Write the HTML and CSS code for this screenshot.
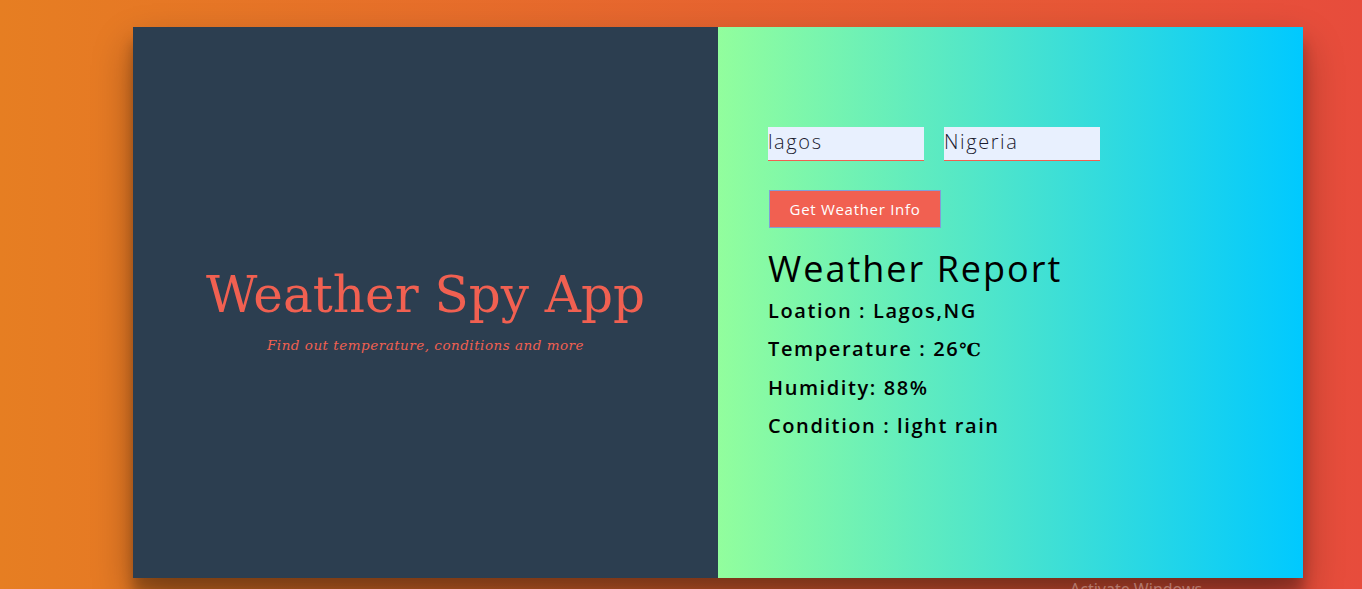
FILE: index.html
```html
<!DOCTYPE html>
<html lang="en">
<head>
<meta charset="utf-8">
<title>Weather Spy App</title>
<link rel="stylesheet" href="styles.css">
</head>
<body>
<div class="card">
  <section class="intro">
    <h1 class="title">Weather Spy App</h1>
    <p class="subtitle">Find out temperature, conditions and more</p>
  </section>
  <section class="panel">
    <form class="search">
      <div class="fields">
        <input class="field" type="text" value="lagos">
        <input class="field" type="text" value="Nigeria">
      </div>
      <button class="btn" type="button">Get Weather Info</button>
    </form>
    <div class="report">
      <h2 class="report-title">Weather Report</h2>
      <p class="row">Loation : Lagos,NG</p>
      <p class="row">Temperature : 26<span class="unit">℃</span></p>
      <p class="row">Humidity: 88%</p>
      <p class="row">Condition : light rain</p>
    </div>
  </section>
</div>
<div class="watermark">Activate Windows</div>
</body>
</html>
```
FILE: styles.css
```css
html, body {
  margin: 0;
  height: 100%;
  overflow: hidden;
}
body {
  background: linear-gradient(to right, #e67e22, #e74c3c);
  padding: 27px 0 0 133px;
  box-sizing: border-box;
  font-family: "Open Sans", sans-serif;
  position: relative;
}
.card {
  width: 1170px;
  height: 551px;
  display: flex;
  box-shadow: 0 19px 38px rgba(0,0,0,0.32), 0 15px 12px rgba(0,0,0,0.25);
}
.intro {
  width: 585px;
  background: #2c3e50;
  display: flex;
  flex-direction: column;
  align-items: center;
  justify-content: center;
  padding-top: 12px;
  box-sizing: border-box;
}
.title {
  margin: 0;
  font-family: "DejaVu Serif", serif;
  font-weight: 400;
  font-size: 50px;
  letter-spacing: 0;
  color: #f16051;
  line-height: 1.2;
}
.subtitle {
  margin: 12px 0 0;
  font-family: "DejaVu Serif", serif;
  font-style: italic;
  font-size: 13.5px;
  letter-spacing: 0.5px;
  color: #f16051;
}
.panel {
  width: 585px;
  background: linear-gradient(to right, #92fe9d, #00c9ff);
  padding: 100px 0 0 50px;
  box-sizing: border-box;
}
.search {
  margin: 0;
}
.fields {
  display: flex;
  gap: 20px;
}
.field {
  width: 156px;
  height: 34px;
  box-sizing: border-box;
  border: none;
  border-bottom: 1px solid #f16051;
  background: #e8f0fe;
  padding: 0 0 4px;
  font-family: "Open Sans", sans-serif;
  font-weight: 300;
  font-size: 20px;
  letter-spacing: 1.6px;
  color: #1a1a2e;
  outline: none;
}
.btn {
  margin: 29px 0 0 1px;
  width: 172px;
  height: 38px;
  background: #f16051;
  border: 1px solid #7f9fd8;
  color: #fff;
  font-family: "Open Sans", sans-serif;
  font-size: 15px;
  letter-spacing: 0.7px;
  padding: 0;
}
.report-title {
  margin: 18px 0 0;
  font-weight: 400;
  font-size: 36px;
  letter-spacing: 2px;
  line-height: 46px;
  color: #000;
}
.row {
  margin: 0;
  font-weight: 600;
  font-size: 20px;
  letter-spacing: 1.6px;
  line-height: 38px;
  color: #000;
}
.unit {
  font-family: "DejaVu Serif", serif;
  font-weight: 700;
  font-size: 18px;
  letter-spacing: 0;
}
.watermark {
  position: absolute;
  left: 1070px;
  top: 578px;
  font-family: "Noto Sans", sans-serif;
  font-size: 16px;
  color: rgba(255,255,255,0.35);
}
```
